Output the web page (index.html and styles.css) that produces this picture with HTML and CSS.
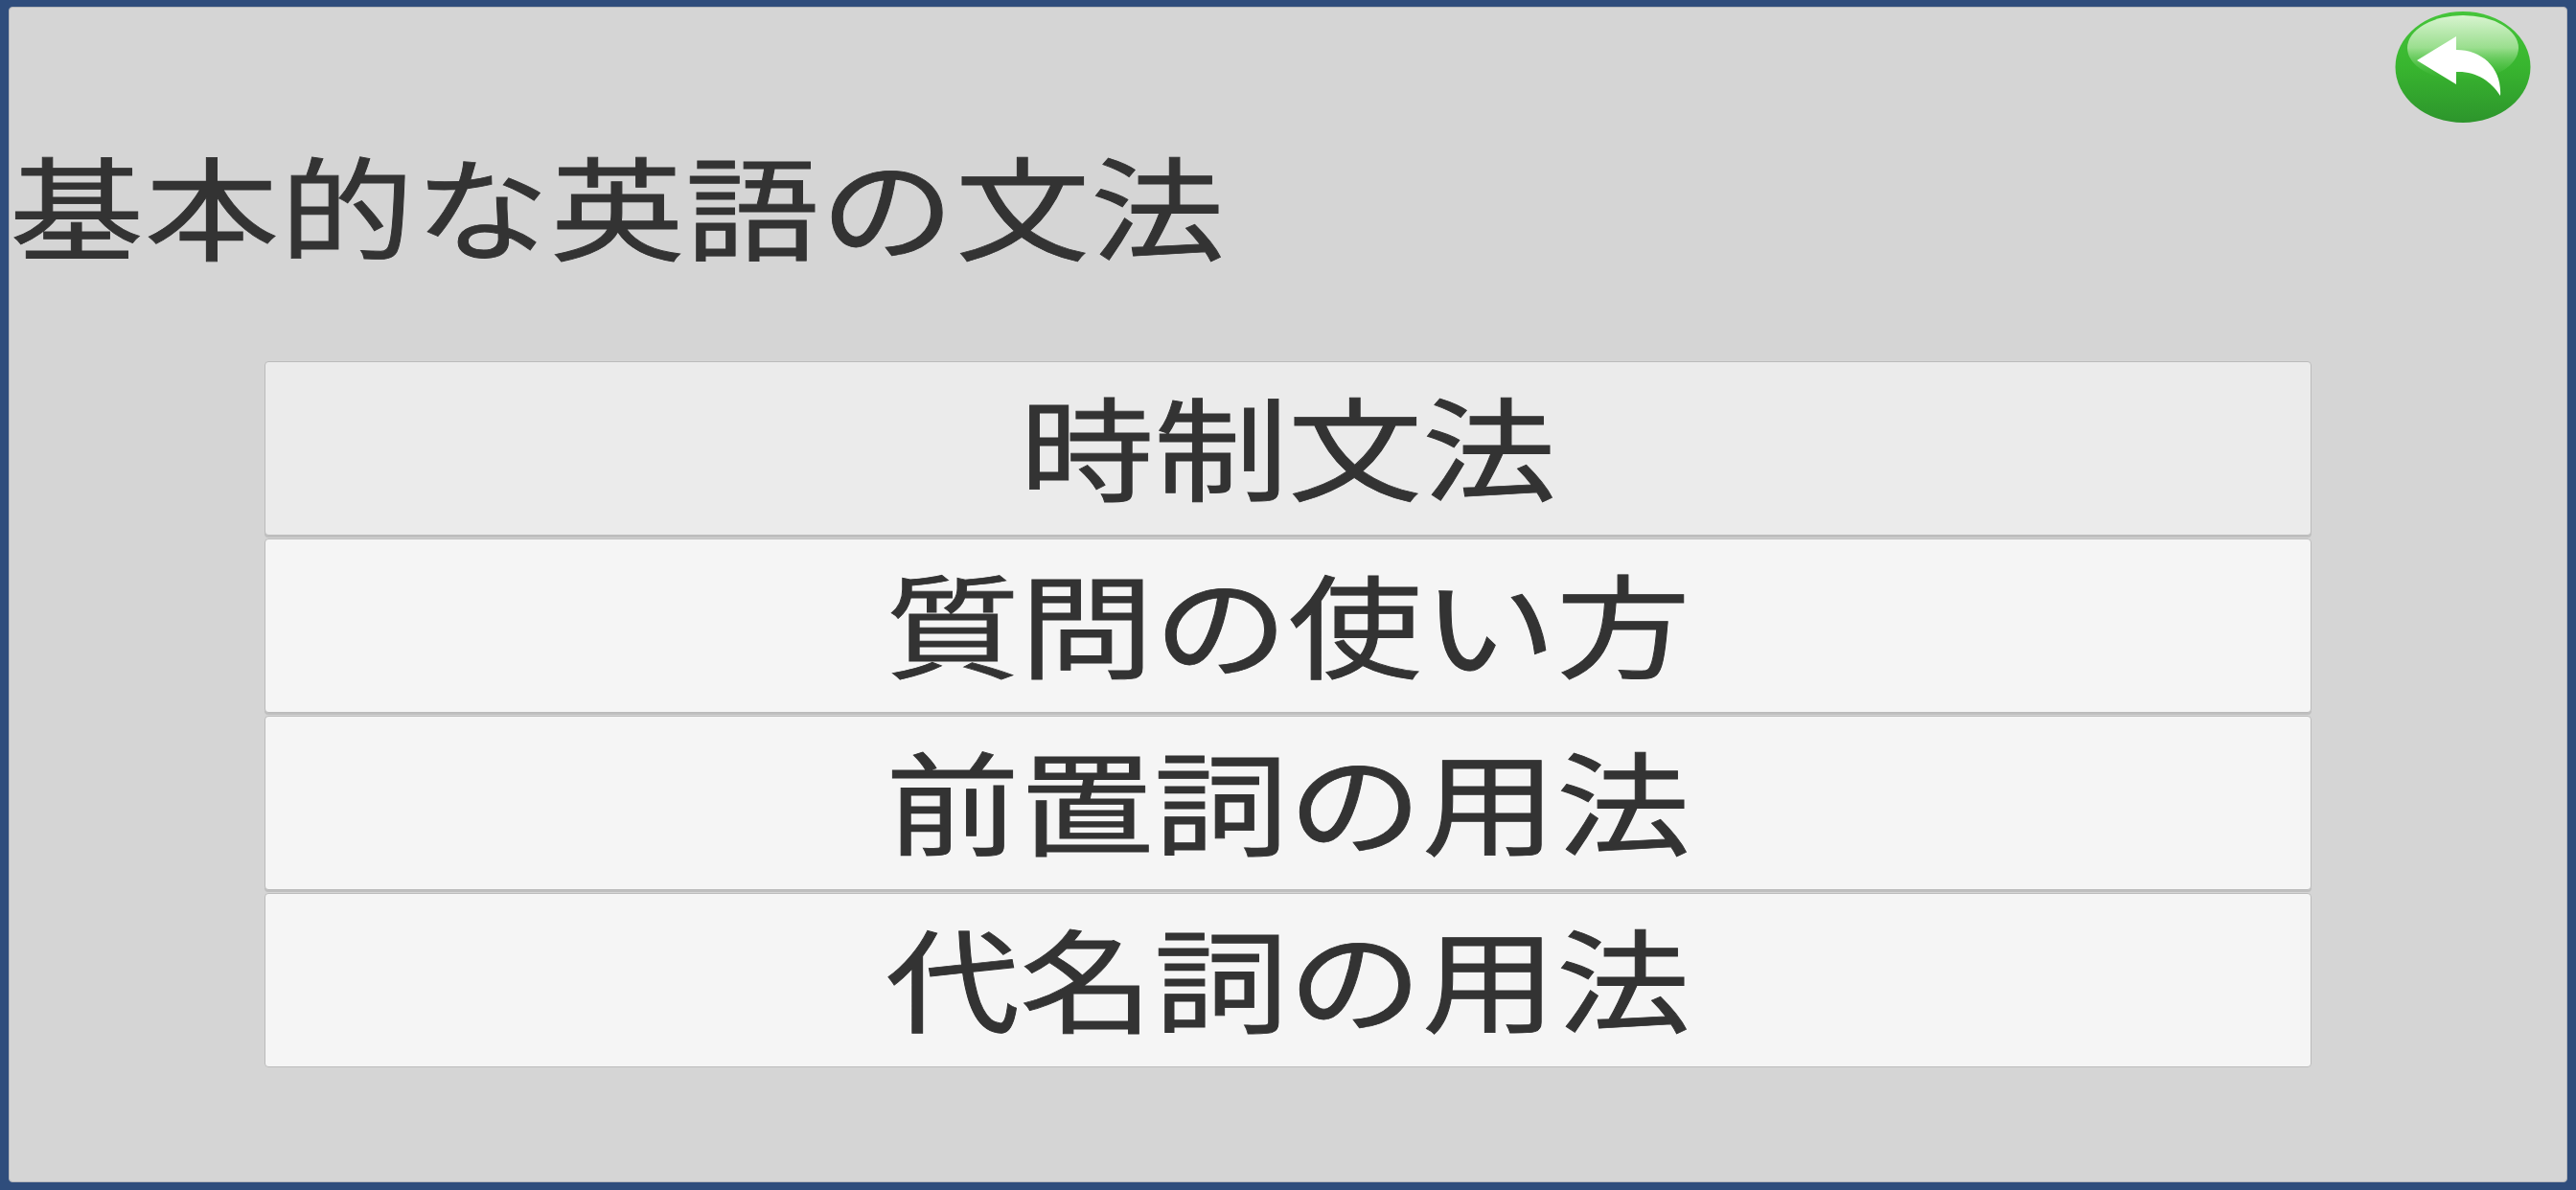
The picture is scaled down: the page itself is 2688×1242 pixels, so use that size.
FILE: index.html
```html
<!DOCTYPE html>
<html lang="ja">
  <head>
    <meta charset="UTF-8" />
    <title>基本的な英語の文法</title>
    <link rel="stylesheet" href="styles.css">
  </head>
  <body>
    <div class="screen">
      <div class="top-bar">
        <a class="back-btn" href="#">
          <svg width="142" height="117" viewBox="0 0 142 117">
            <defs>
              <linearGradient id="ball" x1="0" y1="0" x2="0" y2="1">
                <stop offset="0" stop-color="#45c53a" />
                <stop offset="0.5" stop-color="#38b52f" />
                <stop offset="1" stop-color="#2d952c" />
              </linearGradient>
              <linearGradient id="shine" x1="0" y1="0" x2="0" y2="1">
                <stop offset="0" stop-color="#d8f4d0" />
                <stop offset="0.5" stop-color="#9ade8e" />
                <stop offset="1" stop-color="#45c03c" stop-opacity="0" />
              </linearGradient>
            </defs>
            <ellipse cx="71" cy="58" rx="70.5" ry="58" fill="url(#ball)" />
            <ellipse cx="71" cy="38" rx="58" ry="34" fill="url(#shine)" />
            <path d="M23 51L64 26V40C92 40 112 60 110 88C100 72 84 62 64 63V76Z" fill="#fff" />
          </svg>
        </a>
      </div>
      <h1 class="title"><span class="squat">基本的な英語の文法</span></h1>
      <div class="menu">
        <a class="menu-item active" href="#"><span class="squat">時制文法</span></a>
        <a class="menu-item" href="#"><span class="squat">質問の使い方</span></a>
        <a class="menu-item" href="#"><span class="squat">前置詞の用法</span></a>
        <a class="menu-item" href="#"><span class="squat">代名詞の用法</span></a>
      </div>
    </div>
  </body>
</html>
```

FILE: styles.css
```css
* {
  margin: 0;
  padding: 0;
  box-sizing: border-box;
}
html,
body {
  width: 2688px;
  height: 1242px;
  overflow: hidden;
}
body {
  background-color: #2f4d7c;
  padding: 7px 9px 8px 9px;
  font-family: "Noto Sans CJK JP", "Noto Sans", sans-serif;
  color: #333333;
}
.screen {
  height: 100%;
  background-color: #d5d5d5;
  border: 1px solid #b4b6ba;
  border-radius: 4px;
}
.top-bar {
  display: flex;
  justify-content: flex-end;
  height: 117px;
  margin-top: 4px;
  padding-right: 37px;
}
.back-btn {
  display: block;
  height: 117px;
}
.title {
  font-size: 140px;
  font-weight: 400;
  line-height: 140px;
  letter-spacing: 1px;
  margin-top: 13px;
  white-space: nowrap;
}
.squat {
  display: inline-block;
  transform: scale(1, 0.84);
  -webkit-text-stroke: 1px #333333;
}
.menu {
  display: flex;
  flex-direction: column;
  gap: 3px;
  margin: 95px 266px 0 266px;
}
.menu-item {
  display: flex;
  align-items: center;
  justify-content: center;
  height: 182px;
  padding-bottom: 10px;
  background-color: #f5f5f5;
  border: 1px solid #bbbbbb;
  border-radius: 4px;
  box-shadow: 0 2px 0 #bfbfbf;
  font-size: 140px;
  line-height: 140px;
  color: #333333;
  text-decoration: none;
}
.menu-item:last-child {
  box-shadow: none;
}
.menu-item.active {
  background-color: #ebebeb;
}
```
